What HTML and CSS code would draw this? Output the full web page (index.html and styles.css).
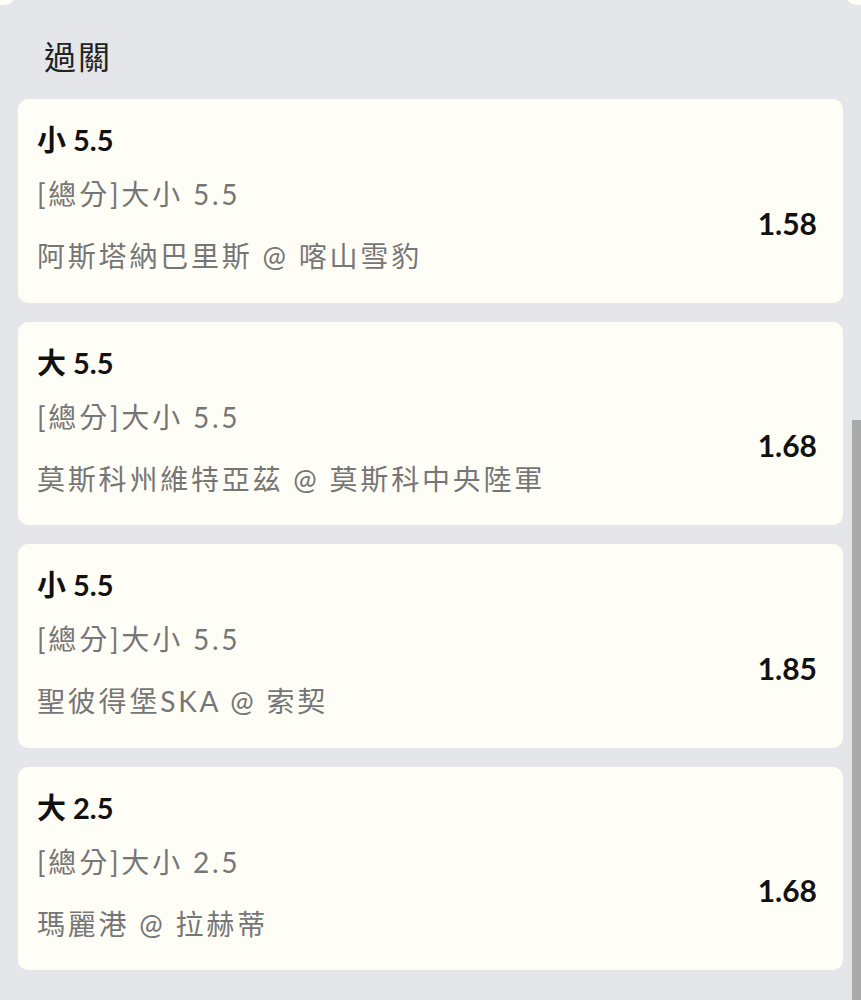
FILE: index.html
```html
<!DOCTYPE html>
<html lang="zh-Hant">
<head>
    <meta charset="UTF-8">
    <meta name="viewport" content="width=device-width, initial-scale=1.0">
    <title>過關</title>
    <link rel="stylesheet" href="styles.css">
</head>
<body>
    <div class="prev-row">
        <span class="prev-end left"></span>
        <span class="prev-end right"></span>
    </div>

    <h2 class="section-title">過關</h2>

    <div class="bet-list">
        <div class="bet-card">
            <div class="bet-pick">小 5.5</div>
            <div class="bet-body">
                <div class="bet-info">
                    <p class="bet-market">[總分]大小 5.5</p>
                    <p class="bet-match">阿斯塔納巴里斯 @ 喀山雪豹</p>
                </div>
                <div class="bet-odds">1.58</div>
            </div>
        </div>

        <div class="bet-card">
            <div class="bet-pick">大 5.5</div>
            <div class="bet-body">
                <div class="bet-info">
                    <p class="bet-market">[總分]大小 5.5</p>
                    <p class="bet-match">莫斯科州維特亞茲 @ 莫斯科中央陸軍</p>
                </div>
                <div class="bet-odds">1.68</div>
            </div>
        </div>

        <div class="bet-card">
            <div class="bet-pick">小 5.5</div>
            <div class="bet-body">
                <div class="bet-info">
                    <p class="bet-market">[總分]大小 5.5</p>
                    <p class="bet-match">聖彼得堡SKA @ 索契</p>
                </div>
                <div class="bet-odds">1.85</div>
            </div>
        </div>

        <div class="bet-card">
            <div class="bet-pick">大 2.5</div>
            <div class="bet-body">
                <div class="bet-info">
                    <p class="bet-market">[總分]大小 2.5</p>
                    <p class="bet-match">瑪麗港 @ 拉赫蒂</p>
                </div>
                <div class="bet-odds">1.68</div>
            </div>
        </div>
    </div>

    <div class="scroll-thumb"></div>
</body>
</html>
```

FILE: styles.css
```css
body {
    margin: 0;
    padding: 0 0 30px;
    font-family: Lato, "Noto Sans CJK TC", sans-serif;
    background: #e5e6e9;
    color: #1a1a1a;
}

.prev-row {
    display: flex;
    justify-content: space-between;
    height: 5px;
}

.prev-end {
    width: 13px;
    height: 5px;
    background: #fffef6;
}

.prev-end.left {
    border-bottom-right-radius: 10px 5px;
}

.prev-end.right {
    border-bottom-left-radius: 10px 5px;
}

.section-title {
    margin: 30px 0 0;
    padding-left: 44px;
    font-size: 32px;
    font-weight: 400;
    line-height: 44px;
    letter-spacing: 2px;
    color: #222;
}

.bet-list {
    display: flex;
    flex-direction: column;
    gap: 19px;
    margin-top: 20px;
    padding: 0 18px;
}

.bet-card {
    background: #fffef6;
    border-radius: 10px;
    padding: 21px 26px 26.5px 19px;
}

.bet-pick {
    font-size: 29px;
    font-weight: 700;
    line-height: 40px;
    color: #111;
}

.bet-body {
    display: flex;
    align-items: center;
    justify-content: space-between;
    margin-top: 14px;
}

.bet-info p {
    margin: 0;
    font-size: 28px;
    line-height: 40px;
    letter-spacing: 2.8px;
    color: #767676;
}

.bet-info .bet-match {
    margin-top: 22px;
}

.bet-odds {
    margin-bottom: 5px;
    font-size: 30px;
    font-weight: 700;
    color: #111;
}

.scroll-thumb {
    position: absolute;
    top: 420px;
    right: 0;
    width: 9px;
    height: 600px;
    background: #aaa;
}
```
